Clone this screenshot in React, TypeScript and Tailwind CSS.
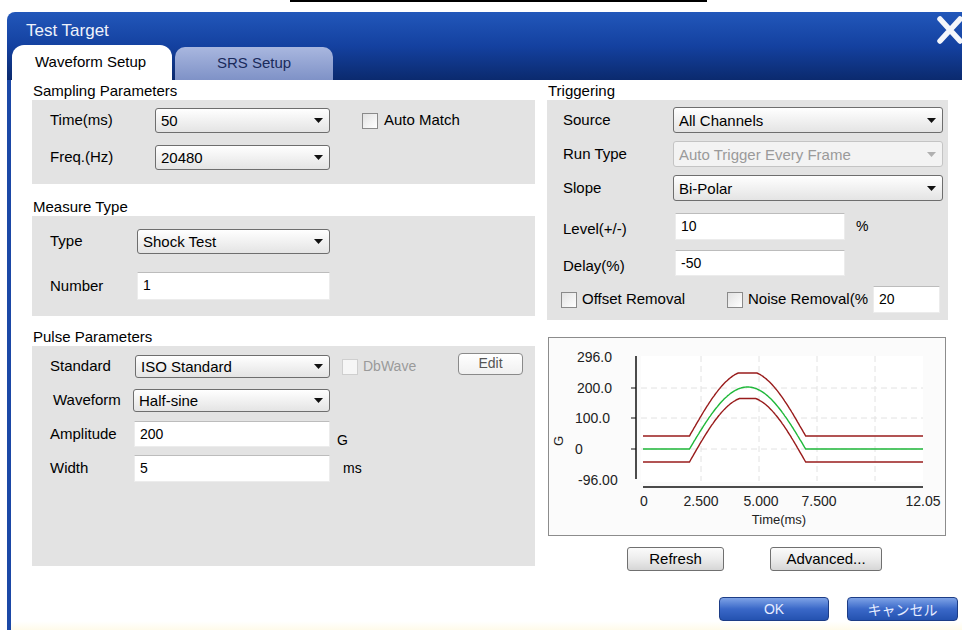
import type { ReactNode } from "react";

const FONT = "font-['Liberation_Sans',Arial,sans-serif]";

const Arrow = ({ muted }: { muted?: boolean }) => (
  <svg width="9" height="5" viewBox="0 0 9 5" className="shrink-0">
    <path d="M0 0 L9 0 L4.5 5 Z" fill={muted ? "#b0b0b0" : "#111"} />
  </svg>
);

const Select = ({
  value,
  width,
  height = "h-[25px]",
  disabled,
}: {
  value: string;
  width: string;
  height?: string;
  disabled?: boolean;
}) => (
  <div
    className={`${width} ${height} shrink-0 flex items-center justify-between pl-[5px] pr-[6px] rounded-[3px] border ${
      disabled
        ? "border-[#c4c4c4] bg-[#f3f3f3] text-[#9a9a9a]"
        : "border-[#6e6e6e] bg-gradient-to-b from-white to-[#e4e4e4] text-black"
    } text-[15px] leading-none`}
  >
    <span>{value}</span>
    <Arrow muted={disabled} />
  </div>
);

const Input = ({ value, width, height }: { value: string; width: string; height: string }) => (
  <div
    className={`${width} ${height} shrink-0 bg-white border border-[#ececec] border-t-[#bcbcbc] flex items-start pt-[3px] pl-[5px] text-[14px] leading-[18px]`}
  >
    {value}
  </div>
);

const Check = ({ disabled }: { disabled?: boolean }) => (
  <div
    className={`w-[16px] h-[16px] shrink-0 border ${
      disabled ? "border-[#cfcfcf] bg-[#f6f6f6]" : "border-[#8a8a8a] bg-gradient-to-br from-[#e2e2e2] to-white"
    }`}
  />
);

const Button = ({ label, width }: { label: string; width: string }) => (
  <div
    className={`${width} h-[24px] shrink-0 flex items-center justify-center rounded-[3px] border border-[#707070] bg-gradient-to-b from-[#fbfbfb] via-[#ececec] to-[#d6d6d6] text-[15px]`}
  >
    {label}
  </div>
);

const BlueButton = ({ label, width, className = "" }: { label: string; width: string; className?: string }) => (
  <div
    className={`${width} h-[24px] shrink-0 flex items-center justify-center rounded-[4px] border border-[#1d3d86] bg-gradient-to-b from-[#7ea2e6] via-[#3a68c8] to-[#2452b0] text-[14px] text-[#e6ecff] ${className}`}
  >
    {label}
  </div>
);

const SectionLabel = ({ children, className = "" }: { children: ReactNode; className?: string }) => (
  <div className={`h-[18px] leading-[18px] pl-[1px] text-[15px] ${className}`}>{children}</div>
);

// waveform preview: nominal half-sine plus its tolerance band
const X0 = 94;
const PX = 280 / 12.05;
const xOf = (t: number) => X0 + t * PX;
const yOf = (v: number) => 111 - v * 0.31;
const sine = (t: number) => (t >= 2 && t <= 7 ? 200 * Math.sin((Math.PI * (t - 2)) / 5) : 0);

const trace = (f: (t: number) => number) => {
  const pts: string[] = [];
  for (let i = 0; i <= 241; i++) {
    const t = Math.min(i * 0.05, 12.05);
    pts.push(`${xOf(t).toFixed(1)},${yOf(f(t)).toFixed(1)}`);
  }
  return pts.join(" ");
};

const Chart = () => (
  <div className="w-[398px] h-[199px] ml-[1px] border border-[#8c8c8c] bg-[#fbfbfb]">
    <svg width="396" height="197" viewBox="0 0 396 197" className="block">
      <rect x="92" y="18" width="282" height="126" fill="#fff" />
      {[152, 210, 268, 326].map((x) => (
        <line key={x} x1={x} y1={18} x2={x} y2={143} stroke="#e2e2e2" strokeDasharray="6 4" />
      ))}
      {[50, 80, 111].map((y) => (
        <line key={y} x1={92} y1={y} x2={374} y2={y} stroke="#e2e2e2" strokeDasharray="6 4" />
      ))}
      <line x1="87" y1="18" x2="87" y2="141" stroke="#111" strokeWidth="1.5" />
      {[50, 80, 111].map((y) => (
        <line key={y} x1={82} y1={y} x2={87} y2={y} stroke="#111" />
      ))}
      <line x1="94" y1="149" x2="374" y2="149" stroke="#111" strokeWidth="1.5" />
      <g fontFamily="Liberation Sans, Arial, sans-serif" fontSize="14" fill="#222">
        <text x="28" y="24">296.0</text>
        <text x="28" y="55">200.0</text>
        <text x="26" y="85">100.0</text>
        <text x="26" y="116">0</text>
        <text x="29" y="147">-96.00</text>
        <text x="95" y="168" textAnchor="middle">0</text>
        <text x="152" y="168" textAnchor="middle">2.500</text>
        <text x="212" y="168" textAnchor="middle">5.000</text>
        <text x="270" y="168" textAnchor="middle">7.500</text>
        <text x="374" y="168" textAnchor="middle">12.05</text>
        <text x="230" y="186" textAnchor="middle" fontSize="13">Time(ms)</text>
        <text x="14" y="103" textAnchor="middle" fontSize="13" transform="rotate(-90 14 103)">G</text>
      </g>
      <polyline points={trace((t) => Math.min(sine(t) * 1.05 + 42, 245))} fill="none" stroke="#991c1c" strokeWidth="1.4" />
      <polyline points={trace((t) => Math.min(sine(t) * 1.05 - 42, 163))} fill="none" stroke="#991c1c" strokeWidth="1.4" />
      <polyline points={trace(sine)} fill="none" stroke="#1fb83a" strokeWidth="1.4" />
    </svg>
  </div>
);

const CloseIcon = () => (
  <svg width="28" height="30" viewBox="0 0 28 30" className="shrink-0 mt-[3px] -mr-[2px]">
    <path d="M4 4 L24 26 M24 4 L4 26" stroke="#f4f6fb" strokeWidth="5.5" strokeLinecap="round" />
  </svg>
);

export default function App() {
  return (
    <div className={`w-[962px] h-[630px] bg-white overflow-hidden flex flex-col text-black ${FONT}`}>
      <div className="h-[12px] shrink-0">
        <div className="ml-[290px] w-[417px] h-[2px] bg-black" />
      </div>
      <div className="flex-1 flex flex-col ml-[7px]">
        {/* title bar with tabs */}
        <div className="h-[68px] shrink-0 rounded-tl-[8px] bg-gradient-to-b from-[#2257ba] via-[#1441a0] to-[#0b2a6e] flex flex-col">
          <div className="h-[33px] flex items-start justify-between">
            <div className="pl-[19px] pt-[9px] text-[17px] leading-[20px] text-[#eef2fa]">Test Target</div>
            <CloseIcon />
          </div>
          <div className="h-[35px] flex items-end">
            <div className="ml-[5px] w-[160px] h-[35px] rounded-t-[12px] bg-white flex items-center pl-[23px] text-[15px]">
              Waveform Setup
            </div>
            <div className="ml-[3px] w-[158px] h-[33px] rounded-t-[10px] bg-gradient-to-b from-[#a9b7df] to-[#7f92c7] flex items-center justify-center text-[15px] text-[#1a2b5c]">
              SRS Setup
            </div>
          </div>
        </div>

        <div className="flex-1 flex border-l-[4px] border-[#1b48a6] pl-[21px] bg-[linear-gradient(to_bottom,#ffffff_98.4%,#fffbea)]">
          {/* left column */}
          <div className="w-[503px] shrink-0 flex flex-col pt-[2px]">
            <SectionLabel>Sampling Parameters</SectionLabel>
            <div className="h-[84px] bg-[#e3e3e3] pt-[8px] flex flex-col gap-[12px]">
              <div className="h-[25px] flex items-center">
                <div className="w-[123px] pl-[18px] text-[15px]">Time(ms)</div>
                <Select value="50" width="w-[175px]" />
                <div className="ml-[32px]">
                  <Check />
                </div>
                <div className="ml-[6px] text-[15px]">Auto Match</div>
              </div>
              <div className="h-[25px] flex items-center">
                <div className="w-[123px] pl-[18px] text-[15px]">Freq.(Hz)</div>
                <Select value="20480" width="w-[175px]" />
              </div>
            </div>

            <SectionLabel className="mt-[14px]">Measure Type</SectionLabel>
            <div className="h-[100px] bg-[#e3e3e3] pt-[13px] flex flex-col">
              <div className="h-[25px] flex items-center">
                <div className="w-[105px] pl-[18px] text-[15px]">Type</div>
                <Select value="Shock Test" width="w-[193px]" />
              </div>
              <div className="mt-[18px] h-[28px] flex items-center">
                <div className="w-[105px] pl-[18px] text-[15px]">Number</div>
                <Input value="1" width="w-[193px]" height="h-[28px]" />
              </div>
            </div>

            <SectionLabel className="mt-[12px]">Pulse Parameters</SectionLabel>
            <div className="h-[220px] bg-[#e3e3e3] pt-[9px] flex flex-col">
              <div className="h-[23px] flex items-center">
                <div className="w-[103px] pl-[18px] text-[15px]">Standard</div>
                <Select value="ISO Standard" width="w-[195px]" height="h-[23px]" />
                <div className="ml-[12px]">
                  <Check disabled />
                </div>
                <div className="ml-[5px] text-[14px] text-[#9a9a9a]">DbWave</div>
                <div className="ml-auto mr-[12px] -mt-[6px] w-[65px] h-[22px] rounded-[4px] border border-[#8a8a8a] bg-gradient-to-b from-white to-[#f0f0f0] flex items-center justify-center text-[14px] text-[#555]">
                  Edit
                </div>
              </div>
              <div className="mt-[11px] h-[23px] flex items-center">
                <div className="w-[101px] pl-[21px] text-[15px]">Waveform</div>
                <Select value="Half-sine" width="w-[197px]" height="h-[23px]" />
              </div>
              <div className="mt-[9px] h-[26px] flex items-center">
                <div className="w-[102px] pl-[18px] text-[15px]">Amplitude</div>
                <Input value="200" width="w-[196px]" height="h-[26px]" />
                <div className="ml-[7px] pt-[12px] text-[14px]">G</div>
              </div>
              <div className="mt-[8px] h-[27px] flex items-center">
                <div className="w-[102px] pl-[18px] text-[15px]">Width</div>
                <Input value="5" width="w-[196px]" height="h-[27px]" />
                <div className="ml-[13px] text-[14px]">ms</div>
              </div>
            </div>
          </div>

          {/* right column */}
          <div className="w-[415px] ml-[12px] shrink-0 flex flex-col pt-[2px]">
            <SectionLabel>Triggering</SectionLabel>
            <div className="w-[401px] h-[220px] bg-[#e3e3e3] pt-[7px] pl-[16px] flex flex-col">
              <div className="h-[26px] flex items-center">
                <div className="w-[110px] text-[15px]">Source</div>
                <Select value="All Channels" width="w-[270px]" height="h-[26px]" />
              </div>
              <div className="mt-[8px] h-[26px] flex items-center">
                <div className="w-[110px] text-[15px]">Run Type</div>
                <Select value="Auto Trigger Every Frame" width="w-[270px]" height="h-[26px]" disabled />
              </div>
              <div className="mt-[8px] h-[26px] flex items-center">
                <div className="w-[110px] text-[15px]">Slope</div>
                <Select value="Bi-Polar" width="w-[270px]" height="h-[26px]" />
              </div>
              <div className="mt-[12px] h-[27px] flex items-center">
                <div className="w-[112px] pt-[6px] text-[15px]">Level(+/-)</div>
                <Input value="10" width="w-[170px]" height="h-[27px]" />
                <div className="ml-[11px] text-[14px]">%</div>
              </div>
              <div className="mt-[10px] h-[26px] flex items-center">
                <div className="w-[112px] pt-[6px] text-[15px]">Delay(%)</div>
                <Input value="-50" width="w-[170px]" height="h-[26px]" />
              </div>
              <div className="mt-[10px] h-[27px] flex items-center -ml-[2px]">
                <div className="w-[166px] flex items-center">
                  <Check />
                  <span className="ml-[5px] text-[15px]">Offset Removal</span>
                </div>
                <div className="w-[146px] flex items-center">
                  <Check />
                  <span className="ml-[5px] text-[15px] whitespace-nowrap">Noise Removal(%</span>
                </div>
                <Input value="20" width="w-[67px]" height="h-[27px]" />
              </div>
            </div>

            <div className="mt-[17px]">
              <Chart />
            </div>

            <div className="mt-[11px] h-[24px] flex">
              <div className="ml-[80px]">
                <Button label="Refresh" width="w-[97px]" />
              </div>
              <div className="ml-[46px]">
                <Button label="Advanced..." width="w-[112px]" />
              </div>
            </div>

            <div className="mt-[26px] h-[24px] flex">
              <BlueButton label="OK" width="w-[110px]" className="ml-[172px]" />
              <BlueButton label="キャンセル" width="w-[111px]" className={`ml-[18px] font-['Noto_Sans_CJK_JP',sans-serif]`} />
            </div>
          </div>
        </div>
      </div>
    </div>
  );
}
